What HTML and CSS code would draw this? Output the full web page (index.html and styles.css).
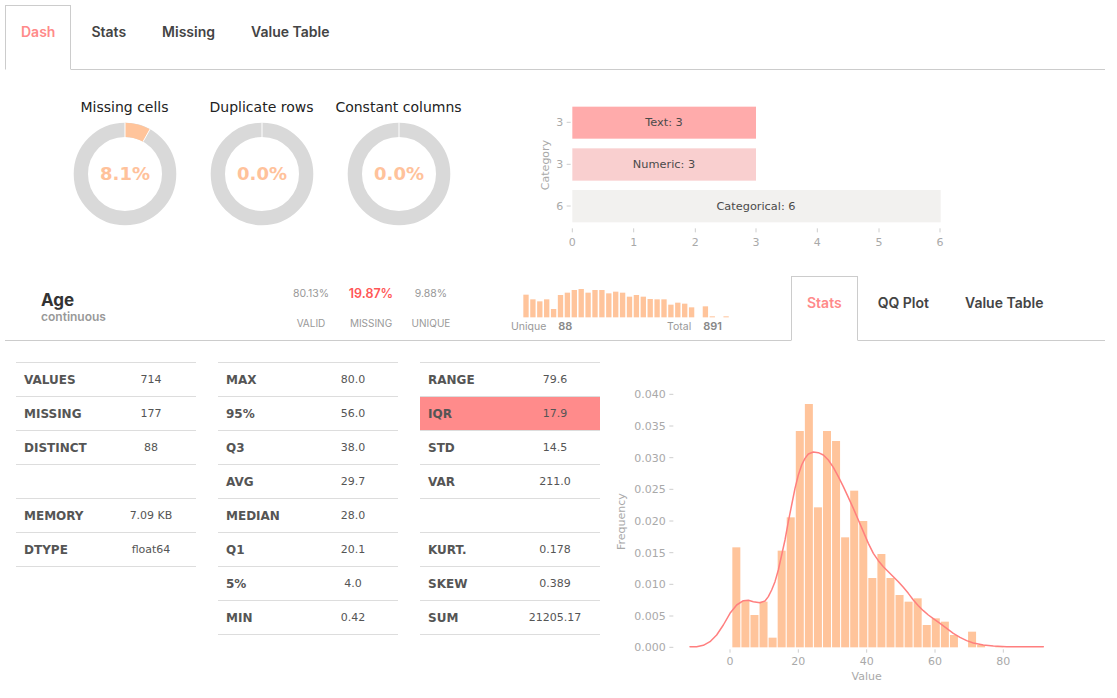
FILE: index.html
```html
<!DOCTYPE html>
<html lang="en">
<head>
<meta charset="utf-8">
<title>Dash</title>
<link rel="stylesheet" href="styles.css">
</head>
<body>
<div class="page">
  <ul class="tabs">
    <li class="tab active">Dash</li>
    <li class="tab">Stats</li>
    <li class="tab">Missing</li>
    <li class="tab">Value Table</li>
  </ul>

  <section class="overview">
    <div class="donuts">
      <div class="donut">
        <div class="donut-title">Missing cells</div>
        <svg width="104" height="104" viewBox="0 0 104 104">
          <circle cx="52" cy="52" r="44.15" fill="none" stroke="#d9d9d9" stroke-width="14.3"/>
          <path d="M52 0.7 A51.3 51.3 0 0 1 77 7.2 L70.03 19.69 A37 37 0 0 0 52 15 Z" fill="#ffc49b"/>
          <line x1="52" y1="15" x2="52" y2="0.5" stroke="#fff" stroke-width="1"/>
          <line x1="70.03" y1="19.69" x2="77.1" y2="7.1" stroke="#fff" stroke-width="1"/>
          <text x="52" y="58" class="donut-value">8.1%</text>
        </svg>
      </div>
      <div class="donut">
        <div class="donut-title">Duplicate rows</div>
        <svg width="104" height="104" viewBox="0 0 104 104">
          <circle cx="52" cy="52" r="44.15" fill="none" stroke="#d9d9d9" stroke-width="14.3"/>
          <line x1="52" y1="15" x2="52" y2="0.5" stroke="#fff" stroke-width="1"/>
          <text x="52" y="58" class="donut-value">0.0%</text>
        </svg>
      </div>
      <div class="donut">
        <div class="donut-title">Constant columns</div>
        <svg width="104" height="104" viewBox="0 0 104 104">
          <circle cx="52" cy="52" r="44.15" fill="none" stroke="#d9d9d9" stroke-width="14.3"/>
          <line x1="52" y1="15" x2="52" y2="0.5" stroke="#fff" stroke-width="1"/>
          <text x="52" y="58" class="donut-value">0.0%</text>
        </svg>
      </div>
    </div>

    <svg class="types-chart" width="420" height="155" viewBox="0 0 1260 465">
      <g class="axis-text">
        <text x="45" y="210" transform="rotate(-90 45 210)" text-anchor="middle" dominant-baseline="central">Category</text>
        <text x="100" y="94" text-anchor="end">3</text>
        <text x="100" y="220" text-anchor="end">3</text>
        <text x="100" y="345" text-anchor="end">6</text>
        <text x="127" y="452" text-anchor="middle">0</text>
        <text x="311" y="452" text-anchor="middle">1</text>
        <text x="496" y="452" text-anchor="middle">2</text>
        <text x="678" y="452" text-anchor="middle">3</text>
        <text x="862" y="452" text-anchor="middle">4</text>
        <text x="1047" y="452" text-anchor="middle">5</text>
        <text x="1230" y="452" text-anchor="middle">6</text>
      </g>
      <g stroke="#b5b5b5" stroke-width="2">
        <line x1="110" y1="82" x2="122" y2="82"/>
        <line x1="110" y1="208" x2="122" y2="208"/>
        <line x1="110" y1="333" x2="122" y2="333"/>
        <line x1="127" y1="400" x2="127" y2="412"/>
        <line x1="311" y1="400" x2="311" y2="412"/>
        <line x1="496" y1="400" x2="496" y2="412"/>
        <line x1="678" y1="400" x2="678" y2="412"/>
        <line x1="862" y1="400" x2="862" y2="412"/>
        <line x1="1047" y1="400" x2="1047" y2="412"/>
        <line x1="1230" y1="400" x2="1230" y2="412"/>
      </g>
      <rect x="127" y="35" width="551" height="96" fill="#ffabab"/>
      <rect x="127" y="160" width="551" height="97" fill="#f9cfcf"/>
      <rect x="127" y="285" width="1105" height="97" fill="#f2f1ef"/>
      <g class="bar-text">
        <text x="402" y="93" text-anchor="middle">Text: 3</text>
        <text x="402" y="219" text-anchor="middle">Numeric: 3</text>
        <text x="678" y="344" text-anchor="middle">Categorical: 6</text>
      </g>
    </svg>
  </section>

  <section class="summary">
    <div class="col-summary">
      <div class="col-name">
        <div class="name">Age</div>
        <div class="type">continuous</div>
      </div>
      <div class="stats">
        <div class="stat">
          <div class="stat-value">80.13%</div>
          <div class="stat-label">VALID</div>
        </div>
        <div class="stat">
          <div class="stat-value warn">19.87%</div>
          <div class="stat-label">MISSING</div>
        </div>
        <div class="stat">
          <div class="stat-value">9.88%</div>
          <div class="stat-label">UNIQUE</div>
        </div>
      </div>
      <div class="mini">
        <svg class="mini-hist" width="220" height="34" viewBox="123 30 660 102">
          <g fill="#ffc49b">
            <rect x="160" y="59" width="16" height="68"/>
            <rect x="180.7" y="73" width="16" height="54"/>
            <rect x="201.4" y="79" width="16" height="48"/>
            <rect x="222.1" y="73" width="16" height="54"/>
            <rect x="242.8" y="102" width="16" height="25"/>
            <rect x="263.5" y="60" width="16" height="67"/>
            <rect x="284.2" y="53" width="16" height="74"/>
            <rect x="304.9" y="45" width="16" height="82"/>
            <rect x="325.6" y="42" width="16" height="85"/>
            <rect x="346.3" y="53" width="16" height="74"/>
            <rect x="367" y="45" width="16" height="82"/>
            <rect x="387.7" y="45" width="16" height="82"/>
            <rect x="408.4" y="55" width="16" height="72"/>
            <rect x="429.1" y="50" width="16" height="77"/>
            <rect x="449.8" y="53" width="16" height="74"/>
            <rect x="470.5" y="65" width="16" height="62"/>
            <rect x="491.2" y="60" width="16" height="67"/>
            <rect x="511.9" y="65" width="16" height="62"/>
            <rect x="532.6" y="72" width="16" height="55"/>
            <rect x="553.3" y="73" width="16" height="54"/>
            <rect x="574" y="73" width="16" height="54"/>
            <rect x="594.7" y="89" width="16" height="38"/>
            <rect x="615.4" y="83" width="16" height="44"/>
            <rect x="636.1" y="86" width="16" height="41"/>
            <rect x="656.8" y="97" width="16" height="30"/>
            <rect x="698.2" y="94" width="16" height="33"/>
            <rect x="718.9" y="124" width="16" height="3"/>
            <rect x="760.3" y="124" width="16" height="3"/>
          </g>
        </svg>
        <div class="mini-labels">
          <span>Unique<b>88</b></span>
          <span class="total">Total<b>891</b></span>
        </div>
      </div>
    </div>
    <ul class="tabs tabs-inline">
      <li class="tab active">Stats</li>
      <li class="tab">QQ Plot</li>
      <li class="tab">Value Table</li>
    </ul>
  </section>

  <section class="details">
    <div class="table">
      <div class="row"><span class="k">VALUES</span><span class="v">714</span></div>
      <div class="row"><span class="k">MISSING</span><span class="v">177</span></div>
      <div class="row"><span class="k">DISTINCT</span><span class="v">88</span></div>
      <div class="row"><span class="k"></span><span class="v"></span></div>
      <div class="row"><span class="k">MEMORY</span><span class="v">7.09 KB</span></div>
      <div class="row"><span class="k">DTYPE</span><span class="v">float64</span></div>
    </div>
    <div class="table">
      <div class="row"><span class="k">MAX</span><span class="v">80.0</span></div>
      <div class="row"><span class="k">95%</span><span class="v">56.0</span></div>
      <div class="row"><span class="k">Q3</span><span class="v">38.0</span></div>
      <div class="row"><span class="k">AVG</span><span class="v">29.7</span></div>
      <div class="row"><span class="k">MEDIAN</span><span class="v">28.0</span></div>
      <div class="row"><span class="k">Q1</span><span class="v">20.1</span></div>
      <div class="row"><span class="k">5%</span><span class="v">4.0</span></div>
      <div class="row"><span class="k">MIN</span><span class="v">0.42</span></div>
    </div>
    <div class="table table-last">
      <div class="row"><span class="k">RANGE</span><span class="v">79.6</span></div>
      <div class="row hl"><span class="k">IQR</span><span class="v">17.9</span></div>
      <div class="row"><span class="k">STD</span><span class="v">14.5</span></div>
      <div class="row"><span class="k">VAR</span><span class="v">211.0</span></div>
      <div class="row"><span class="k"></span><span class="v"></span></div>
      <div class="row"><span class="k">KURT.</span><span class="v">0.178</span></div>
      <div class="row"><span class="k">SKEW</span><span class="v">0.389</span></div>
      <div class="row"><span class="k">SUM</span><span class="v">21205.17</span></div>
    </div>

    <svg class="histogram" width="460" height="310" viewBox="0 0 1380 930">
      <g class="axis-text">
        <text x="197" y="55" text-anchor="end">0.040</text>
        <text x="197" y="150" text-anchor="end">0.035</text>
        <text x="197" y="245" text-anchor="end">0.030</text>
        <text x="197" y="340" text-anchor="end">0.025</text>
        <text x="197" y="435" text-anchor="end">0.020</text>
        <text x="197" y="530" text-anchor="end">0.015</text>
        <text x="197" y="625" text-anchor="end">0.010</text>
        <text x="197" y="720" text-anchor="end">0.005</text>
        <text x="197" y="814" text-anchor="end">0.000</text>
        <text x="390" y="854" text-anchor="middle">0</text>
        <text x="595" y="854" text-anchor="middle">20</text>
        <text x="800" y="854" text-anchor="middle">40</text>
        <text x="1005" y="854" text-anchor="middle">60</text>
        <text x="1210" y="854" text-anchor="middle">80</text>
        <text x="800" y="901" text-anchor="middle">Value</text>
        <text x="65" y="425" transform="rotate(-90 65 425)" text-anchor="middle" dominant-baseline="central">Frequency</text>
      </g>
      <g stroke="#b5b5b5" stroke-width="2">
        <line x1="208" y1="43" x2="220" y2="43"/>
        <line x1="208" y1="138" x2="220" y2="138"/>
        <line x1="208" y1="233" x2="220" y2="233"/>
        <line x1="208" y1="328" x2="220" y2="328"/>
        <line x1="208" y1="423" x2="220" y2="423"/>
        <line x1="208" y1="518" x2="220" y2="518"/>
        <line x1="208" y1="613" x2="220" y2="613"/>
        <line x1="208" y1="708" x2="220" y2="708"/>
        <line x1="208" y1="802" x2="220" y2="802"/>
        <line x1="390" y1="808" x2="390" y2="818"/>
        <line x1="595" y1="808" x2="595" y2="818"/>
        <line x1="800" y1="808" x2="800" y2="818"/>
        <line x1="1005" y1="808" x2="1005" y2="818"/>
        <line x1="1210" y1="808" x2="1210" y2="818"/>
      </g>
      <g fill="#ffc49b">
        <rect x="397" y="502" width="24" height="300"/>
        <rect x="424.2" y="663" width="24" height="139"/>
        <rect x="451.4" y="705" width="24" height="97"/>
        <rect x="478.6" y="665" width="24" height="137"/>
        <rect x="505.8" y="773" width="24" height="29"/>
        <rect x="533" y="512" width="24" height="290"/>
        <rect x="560.2" y="412" width="24" height="390"/>
        <rect x="587.4" y="153" width="24" height="649"/>
        <rect x="614.6" y="72" width="24" height="730"/>
        <rect x="641.8" y="382" width="24" height="420"/>
        <rect x="669" y="153" width="24" height="649"/>
        <rect x="696.2" y="183" width="24" height="619"/>
        <rect x="723.4" y="472" width="24" height="330"/>
        <rect x="750.6" y="332" width="24" height="470"/>
        <rect x="777.8" y="423" width="24" height="379"/>
        <rect x="805" y="594" width="24" height="208"/>
        <rect x="832.2" y="522" width="24" height="280"/>
        <rect x="859.4" y="594" width="24" height="208"/>
        <rect x="886.6" y="645" width="24" height="157"/>
        <rect x="913.8" y="665" width="24" height="137"/>
        <rect x="941" y="655" width="24" height="147"/>
        <rect x="968.2" y="735" width="24" height="67"/>
        <rect x="995.4" y="715" width="24" height="87"/>
        <rect x="1022.6" y="725" width="24" height="77"/>
        <rect x="1049.8" y="765" width="24" height="37"/>
        <rect x="1104.2" y="755" width="24" height="47"/>
        <rect x="1131.4" y="795" width="24" height="7"/>
        <rect x="1185.8" y="799" width="24" height="3"/>
      </g>
      <polyline fill="none" stroke="#ff7f7f" stroke-width="4.5" stroke-linejoin="round" stroke-linecap="round"
        points="270,800 290,800 310,796 330,785 350,765 370,735 390,700 410,675 430,662 445,661 460,665 480,668 495,663 505,650 515,630 525,605 535,570 545,525 555,480 565,425 575,375 585,325 595,285 605,255 615,235 625,222 640,216 655,218 670,225 685,240 700,262 715,290 730,320 745,352 760,385 775,420 790,455 805,490 820,520 835,542 850,560 865,575 880,590 895,605 910,622 925,640 940,660 955,677 970,692 985,705 1000,716 1020,730 1040,745 1060,760 1080,772 1100,782 1120,789 1150,795 1180,798 1220,800 1330,800"/>
    </svg>
  </section>
</div>
</body>
</html>
```

FILE: styles.css
```css
* {
  box-sizing: border-box;
}

body {
  margin: 0;
  background: #fff;
  font-family: Inter, "DejaVu Sans", sans-serif;
}

.page {
  width: 1117px;
  padding: 5px 12px 0 5px;
}

/* Tabs */
.tabs {
  display: flex;
  list-style: none;
  margin: 0;
  padding: 0;
  border-bottom: 1px solid #ccc;
}

.tab {
  margin: 0 4px -1px 0;
  padding: 16px 15px 27px;
  border: 1px solid transparent;
  font-size: 14px;
  font-weight: 600;
  line-height: 20px;
  color: #444;
  white-space: nowrap;
}

.tab.active {
  border-color: #ccc #ccc #fff;
  background: #fff;
  color: #ff8a8a;
}

.tabs-inline {
  border-bottom: none;
}

/* Overview */
.overview {
  display: flex;
  height: 206px;
}

.donuts {
  display: flex;
  margin-left: 51px;
  padding-top: 29px;
}

.donut {
  width: 137px;
  display: flex;
  flex-direction: column;
  align-items: center;
}

.donut-title {
  font-family: "DejaVu Sans", sans-serif;
  font-size: 14px;
  line-height: 17px;
  color: #222;
  white-space: nowrap;
}

.donut svg {
  display: block;
  margin-top: 6px;
}

.donut-value {
  font-family: "DejaVu Sans", sans-serif;
  font-weight: bold;
  font-size: 18px;
  fill: #ffc29b;
  text-anchor: middle;
}

.types-chart {
  display: block;
  margin: 25px 0 0 63px;
}

.axis-text text {
  font-family: "DejaVu Sans", sans-serif;
  font-size: 33px;
  fill: #a9a9a9;
}

.bar-text text {
  font-family: "DejaVu Sans", sans-serif;
  font-size: 34px;
  fill: #4a4a4a;
}

/* Column summary */
.summary {
  display: flex;
  border-bottom: 1px solid #ccc;
}

.col-summary {
  width: 786px;
  display: flex;
}

.col-name {
  width: 276px;
  padding: 14px 0 0 36px;
}

.col-name .name {
  font-size: 17px;
  font-weight: 700;
  line-height: 20px;
  color: #333;
}

.col-name .type {
  font-size: 12px;
  font-weight: 600;
  line-height: 14px;
  color: #999;
}

.stats {
  display: flex;
  padding-top: 10px;
}

.stat {
  width: 60px;
  text-align: center;
}

.stat-value {
  font-size: 10.5px;
  line-height: 16px;
  color: #999;
}

.stat-value.warn {
  font-size: 12.5px;
  font-weight: 600;
  color: #ff5757;
}

.stat-label {
  margin-top: 14px;
  font-size: 10px;
  line-height: 14px;
  color: #999;
}

.mini {
  width: 220px;
  margin-left: 50px;
  padding-top: 9px;
}

.mini-hist {
  display: block;
}

.mini-labels {
  display: flex;
  width: 211px;
  font-size: 10.5px;
  line-height: 14px;
  color: #999;
}

.mini-labels b {
  margin-left: 12px;
  font-size: 11px;
  font-weight: 600;
  color: #888;
}

.mini-labels .total {
  margin-left: auto;
}

/* Details */
.details {
  display: flex;
  align-items: flex-start;
  margin-top: 21px;
  padding-left: 11px;
}

.table {
  width: 180px;
  margin-right: 22px;
  border-top: 1px solid #ddd;
}

.table-last {
  margin-right: 0;
}

.row {
  display: grid;
  grid-template-columns: 90px 90px;
  align-items: center;
  height: 34px;
  border-bottom: 1px solid #ddd;
}

.row .k {
  padding-left: 8px;
  font-family: "DejaVu Sans", sans-serif;
  font-weight: bold;
  font-size: 12px;
  color: #555;
}

.row .v {
  text-align: center;
  font-family: "DejaVu Sans", sans-serif;
  font-size: 11px;
  color: #555;
}

.row.hl {
  background: #ff8b8b;
}

.histogram {
  display: block;
  margin-top: 18px;
}
```
